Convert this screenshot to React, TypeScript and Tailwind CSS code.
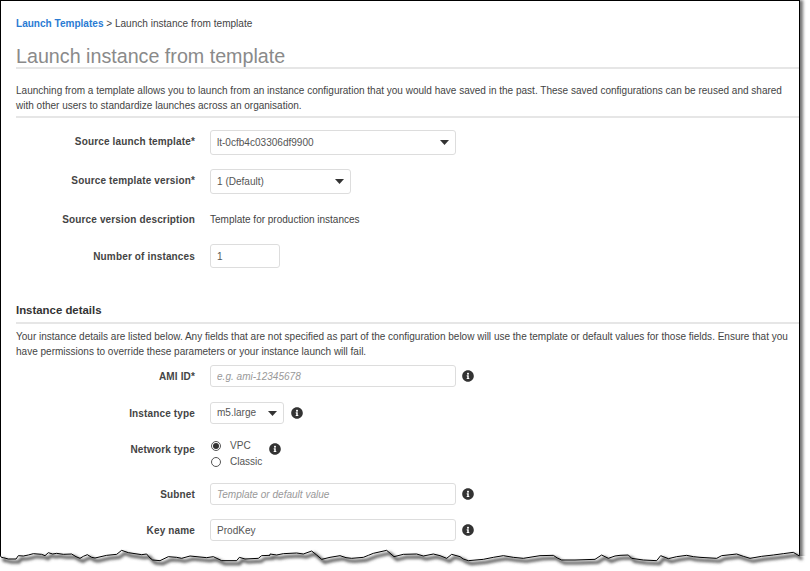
import type { ReactNode } from "react";
import { FaInfoCircle } from "react-icons/fa";

// torn bottom edge, points read off the zoomed screenshot (x/3, 540 + y/3)
const tearLeft = [[0,45],[4,52],[10,53],[25,57],[48,57],[55,47],[70,48],[85,45],[100,41],[125,43],[135,47],[145,38],[158,42],[170,40],[190,43],[215,42],[228,50],[240,55],[250,49],[262,44],[275,52],[285,54],[320,46],[350,43],[365,31],[385,38],[405,41],[425,44],[440,42],[450,54],[458,60],[480,62],[505,50],[530,52],[545,55],[570,48],[600,51],[620,53],[640,50],[665,62],[710,62],[718,52],[735,57],[775,55],[785,47],[810,46]];
const tearMid = [[0,42],[20,45],[40,41],[80,39],[100,42],[125,33],[140,45],[155,58],[180,52],[210,47],[228,53],[245,55],[280,52],[295,46],[310,40],[350,31],[372,50],[400,43],[440,42],[460,48],[490,42],[510,47],[530,55],[545,43],[570,50],[580,57],[595,62],[640,58],[670,52],[700,47],[730,52],[760,55],[810,47]];
const tearRight = [[0,47],[40,46],[52,54],[65,60],[105,60],[165,58],[185,45],[205,55],[225,48],[240,46],[265,45],[275,55],[310,60],[350,62],[362,47],[385,56],[410,50],[440,46],[460,50],[480,52],[530,55],[545,47],[590,42],[610,49],[630,55],[665,49],[700,45],[730,41],[760,37],[778,48]];

const tearPoints = [
  ...tearLeft.map(([x, y]) => [x / 3, y / 3 + 540]),
  ...tearMid.map(([x, y]) => [x / 3 + 270, y / 3 + 540]),
  ...tearRight.map(([x, y]) => [x / 3 + 540, y / 3 + 540]),
]
  .map((p) => p.join(","))
  .join(" ");

function TornEdge() {
  return (
    <svg className="absolute left-0 top-0" width="810" height="571" viewBox="0 0 810 571">
      <defs>
        <filter id="tear-blur" x="-5%" y="-100%" width="110%" height="300%">
          <feGaussianBlur stdDeviation="1.8" />
        </filter>
      </defs>
      <polygon points={`${tearPoints} 810,556 810,571 0,571`} fill="#fff" />
      <polyline points={tearPoints} transform="translate(3 3)" fill="none" stroke="#555" strokeWidth="3" filter="url(#tear-blur)" />
      <polyline points={tearPoints} fill="none" stroke="#000" strokeWidth="1" />
    </svg>
  );
}

function Row({ label, className, children }: { label: string; className: string; children: ReactNode }) {
  return (
    <div className={`flex items-center ${className}`}>
      <div className="w-[179px] text-right text-[10px] font-bold tracking-[0.15px] text-[#444]">{label}</div>
      <div className="ml-[15px] flex items-center">{children}</div>
    </div>
  );
}

function Info({ className = "ml-[6px]" }: { className?: string }) {
  return <FaInfoCircle className={`size-[12px] text-[#333] ${className}`} />;
}

function SelectBox({ value, className }: { value: string; className: string }) {
  return (
    <div className={`flex items-center justify-between rounded-[3px] border border-[#ddd] bg-white pl-[6px] pr-[6px] text-[10.05px] text-[#555] ${className}`}>
      <span>{value}</span>
      <svg width="9" height="5" viewBox="0 0 9 5" className="text-[#333]">
        <path d="M0 0h9L4.5 5z" fill="currentColor" />
      </svg>
    </div>
  );
}

function TextInput({ value, placeholder, className }: { value?: string; placeholder?: string; className: string }) {
  return (
    <input
      readOnly
      value={value}
      placeholder={placeholder}
      className={`rounded-[3px] border border-[#ddd] bg-white px-[6px] text-[10.05px] text-[#555] outline-none placeholder:italic placeholder:text-[#999] ${className}`}
    />
  );
}

function Radio({ label, checked }: { label: string; checked?: boolean }) {
  return (
    <div className="flex h-[16px] items-center">
      <span className="flex size-[10px] items-center justify-center rounded-full border border-[#555] bg-white">
        {checked && <span className="size-[6px] rounded-full bg-[#333]" />}
      </span>
      <span className="ml-[9px] text-[10.05px] text-[#555]">{label}</span>
    </div>
  );
}

export default function App() {
  return (
    <div className="relative h-[571px] w-[810px] overflow-hidden bg-white font-['Liberation_Sans',Arial,sans-serif]">
      <div className="h-[562px] w-[800px] border-x border-t border-black pl-[15px] shadow-[3px_0_3px_rgba(0,0,0,0.55)]">
        {/* Header */}
        <div className="mt-[16px] h-[14px] text-[10.05px] leading-[14px] text-[#444]">
          <a href="#" className="font-bold text-[#2a7bd3]">Launch Templates</a> &gt; Launch instance from template
        </div>
        <h1 className="mt-[13px] h-[23px] text-[19.7px] leading-[24px] text-[#8a8a8a]">Launch instance from template</h1>
        <div className="h-[2px] bg-[#e6e6e6]" />
        <p className="mt-[15px] h-[32px] text-[10.02px] leading-[14.5px] text-[#444]">
          Launching from a template allows you to launch from an instance configuration that you would have saved in the past. These saved configurations can be reused and shared with other users to standardize launches across an organisation.
        </p>
        <div className="h-[2px] bg-[#e6e6e6]" />

        {/* Source template */}
        <Row label="Source launch template*" className="mt-[11px] h-[25px]">
          <SelectBox value="lt-0cfb4c03306df9900" className="mt-[2px] h-[25px] w-[246px]" />
        </Row>
        <Row label="Source template version*" className="mt-[14px] h-[25px]">
          <SelectBox value="1 (Default)" className="mt-[2px] h-[25px] w-[141px]" />
        </Row>
        <Row label="Source version description" className="mt-[18px] h-[16px]">
          <span className="text-[10px] text-[#444]">Template for production instances</span>
        </Row>
        <Row label="Number of instances" className="mt-[17px] h-[24px]">
          <TextInput value="1" className="h-[24px] w-[70px]" />
        </Row>

        {/* Instance details */}
        <h2 className="mt-[34px] h-[16px] text-[11.4px] font-bold leading-[16px] text-[#333]">Instance details</h2>
        <div className="mt-[4px] h-[2px] bg-[#e6e6e6]" />
        <p className="mt-[5px] h-[34px] text-[10.02px] leading-[15px] text-[#444]">
          Your instance details are listed below. Any fields that are not specified as part of the configuration below will use the template or default values for those fields. Ensure that you have permissions to override these parameters or your instance launch will fail.
        </p>
        <Row label="AMI ID*" className="mt-[2px] h-[22px]">
          <TextInput placeholder="e.g. ami-12345678" className="h-[22px] w-[246px]" />
          <Info />
        </Row>
        <Row label="Instance type" className="mt-[15px] h-[22px]">
          <SelectBox value="m5.large" className="h-[22px] w-[74px]" />
          <Info className="ml-[7px]" />
        </Row>
        <Row label="Network type" className="mt-[14px] h-[22px]">
          <div className="mt-[10px] flex flex-col pl-[1px]">
            <Radio label="VPC" checked />
            <Radio label="Classic" />
          </div>
          <Info className="ml-[7px]" />
        </Row>
        <Row label="Subnet" className="mt-[23px] h-[22px]">
          <TextInput placeholder="Template or default value" className="h-[22px] w-[246px]" />
          <Info />
        </Row>
        <Row label="Key name" className="mt-[14px] h-[22px]">
          <TextInput value="ProdKey" className="h-[22px] w-[246px]" />
          <Info />
        </Row>
      </div>
      <TornEdge />
    </div>
  );
}
